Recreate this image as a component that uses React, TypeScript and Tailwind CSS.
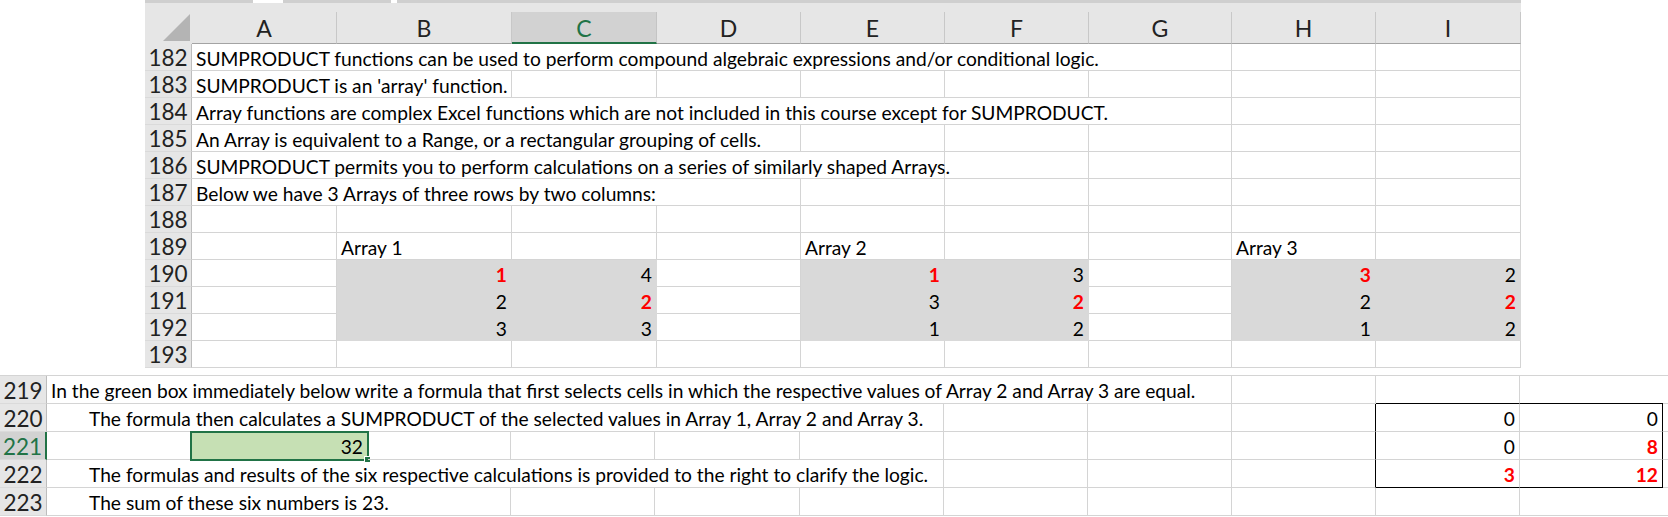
import clsx from 'clsx'

type Cell = {
  span?: number
  t?: string
  right?: boolean
  red?: boolean
  gray?: boolean
  indent?: boolean
  extra?: string
}

const SPAN: Record<number, string> = {
  1: 'col-span-1',
  2: 'col-span-2',
  3: 'col-span-3',
  4: 'col-span-4',
  5: 'col-span-5',
  6: 'col-span-6',
  7: 'col-span-7',
  8: 'col-span-8',
}

const TOP_GRID = 'grid grid-cols-[47px_145px_175px_145px_144px_144px_144px_143px_144px_145px]'
const BOT_GRID = 'grid grid-cols-[47px_144px_177px_143px_144px_145px_144px_144px_144px_144px_144px_143px_1fr]'

const e = (n = 1): Cell[] => Array.from({ length: n }, () => ({}))
const g = (t: string, red = false): Cell => ({ t, right: true, gray: true, red })

const topRows: [number, Cell[]][] = [
  [182, [{ span: 7, t: 'SUMPRODUCT functions can be used to perform compound algebraic expressions and/or conditional logic.' }, ...e(2)]],
  [183, [{ span: 2, t: "SUMPRODUCT is an 'array' function." }, ...e(7)]],
  [184, [{ span: 7, t: 'Array functions are complex Excel functions which are not included in this course except for SUMPRODUCT.' }, ...e(2)]],
  [185, [{ span: 4, t: 'An Array is equivalent to a Range, or a rectangular grouping of cells.' }, ...e(5)]],
  [186, [{ span: 5, t: 'SUMPRODUCT permits you to perform calculations on a series of similarly shaped Arrays.' }, ...e(4)]],
  [187, [{ span: 4, t: 'Below we have 3 Arrays of three rows by two columns:' }, ...e(5)]],
  [188, e(9)],
  [189, [{}, { t: 'Array 1' }, {}, {}, { t: 'Array 2' }, {}, {}, { t: 'Array 3' }, {}]],
  [190, [{}, g('1', true), g('4'), {}, g('1', true), g('3'), {}, g('3', true), g('2')]],
  [191, [{}, g('2'), g('2', true), {}, g('3'), g('2', true), {}, g('2'), g('2', true)]],
  [192, [{}, g('3'), g('3'), {}, g('1'), g('2'), {}, g('1'), g('2')]],
  [193, e(9)],
]

const BOX_L = 'border-r-black'
const BOX_B = 'border-b-black'
const BOX_R = 'border-r-black'

const botRows: [number, Cell[]][] = [
  [219, [
    { span: 8, t: 'In the green box immediately below write a formula that first selects cells in which the respective values of Array 2 and Array 3 are equal.' },
    {}, { extra: BOX_B }, { extra: clsx(BOX_B, 'border-r-0') }, { extra: 'border-r-0' },
  ]],
  [220, [
    { span: 6, indent: true, t: 'The formula then calculates a SUMPRODUCT of the selected values in Array 1, Array 2 and Array 3.' },
    {}, {}, { extra: BOX_L }, { t: '0', right: true }, { t: '0', right: true, extra: BOX_R }, { extra: 'border-r-0' },
  ]],
  [221, [
    {}, { t: '32', right: true, extra: 'selected' }, {}, {}, {}, {}, {}, {}, { extra: BOX_L },
    { t: '0', right: true }, { t: '8', right: true, red: true, extra: BOX_R }, { extra: 'border-r-0' },
  ]],
  [222, [
    { span: 6, indent: true, t: 'The formulas and results of the six respective calculations is provided to the right to clarify the logic.' },
    {}, {}, { extra: BOX_L }, { t: '3', right: true, red: true, extra: BOX_B },
    { t: '12', right: true, red: true, extra: clsx(BOX_B, BOX_R) }, { extra: 'border-r-0' },
  ]],
  [223, [
    { span: 3, indent: true, t: 'The sum of these six numbers is 23.' },
    {}, {}, {}, {}, {}, {}, {}, { extra: 'border-r-0' }, { extra: 'border-r-0' },
  ]],
]

function GridCell({ c }: { c: Cell }) {
  const selected = c.extra === 'selected'
  return (
    <div
      className={clsx(
        'relative flex items-center whitespace-nowrap border-r border-b pt-[3px] text-[19.2px] leading-none',
        SPAN[c.span ?? 1],
        c.gray ? 'bg-[#d9d9d9] border-[#d9d9d9]' : 'border-[#d4d4d4]',
        c.right ? 'justify-end pr-[4px]' : c.indent ? 'pl-[42px]' : 'pl-[4px]',
        c.red && 'font-bold text-[#ff0000]',
        selected && 'bg-[#c6e0b4] outline-2 -outline-offset-1 outline-[#217346]',
        !selected && c.extra,
      )}
    >
      {c.t}
      {selected && (
        <span className="absolute -right-[4px] -bottom-[4px] h-[7px] w-[7px] border border-white bg-[#217346]" />
      )}
    </div>
  )
}

function RowHead({ n, active }: { n: number; active?: boolean }) {
  return (
    <div
      className={clsx(
        'flex items-center justify-center border-b border-[#dadada] pt-[3px] text-[22.5px] leading-none',
        active
          ? 'bg-[#d2d2d2] text-[#217346] border-r-2 border-r-[#217346]'
          : 'bg-[#e6e6e6] text-[#222] border-r border-r-[#bdbdbd]',
      )}
    >
      {n}
    </div>
  )
}

const LETTERS = ['A', 'B', 'C', 'D', 'E', 'F', 'G', 'H', 'I']

export default function App() {
  return (
    <div className="h-[517px] w-[1668px] overflow-hidden bg-white font-[family-name:Lato,sans-serif] text-black">
      {/* ribbon remnant */}
      <div className="flex h-[3px] pl-[145px]">
        <div className="w-[108px] bg-[#cfcfcf]" />
        <div className="w-[30px]" />
        <div className="w-[108px] bg-[#cfcfcf]" />
        <div className="w-[6px]" />
        <div className="w-[1124px] bg-[#cfcfcf]" />
      </div>

      <div className="ml-[145px] w-[1376px]">
        <div className={clsx(TOP_GRID, 'h-[41px] bg-[#e6e6e6]')}>
          <div className="flex items-end justify-end pr-[2px] pb-[3px]">
            <svg width="27" height="27" viewBox="0 0 27 27">
              <polygon points="27,0 27,27 0,27" fill="#b4b4b4" />
            </svg>
          </div>
          {LETTERS.map(l => (
            <div
              key={l}
              className={clsx(
                'mt-[9px] flex items-center justify-center pt-[2px] text-[23px] leading-none',
                l === 'C'
                  ? 'bg-[#d2d2d2] text-[#217346] border-r border-r-[#c4c4c4] border-b-2 border-b-[#217346]'
                  : 'text-[#222] border-r border-r-[#c8c8c8] border-b border-b-[#a3a3a3]',
              )}
            >
              {l}
            </div>
          ))}
        </div>

        <div className={clsx(TOP_GRID, 'auto-rows-[27px]')}>
          {topRows.map(([n, cells]) => (
            <Row key={n} n={n} cells={cells} />
          ))}
        </div>
      </div>

      <div className={clsx(BOT_GRID, 'mt-[7px] auto-rows-[28px] border-t border-[#d4d4d4]')}>
        {botRows.map(([n, cells]) => (
          <Row key={n} n={n} cells={cells} active={n === 221} />
        ))}
      </div>
    </div>
  )
}

function Row({ n, cells, active }: { n: number; cells: Cell[]; active?: boolean }) {
  return (
    <>
      <RowHead n={n} active={active} />
      {cells.map((c, i) => (
        <GridCell key={i} c={c} />
      ))}
    </>
  )
}
